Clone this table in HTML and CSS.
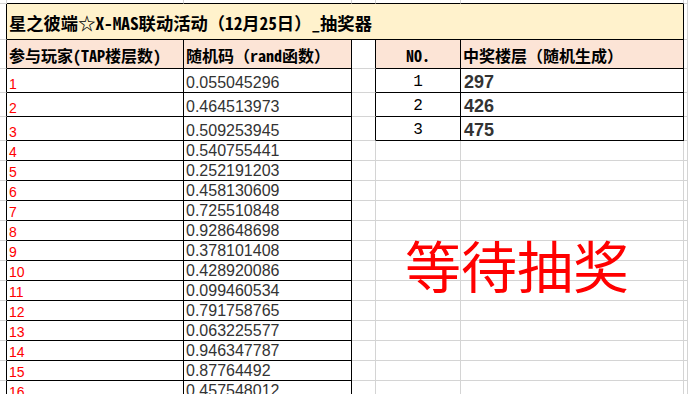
FILE: index.html
```html
<!DOCTYPE html>
<html lang="zh">
<head>
<meta charset="utf-8">
<title>抽奖器</title>
<link rel="stylesheet" href="styles.css">
</head>
<body>
<div class="sheet">
  <!-- row 0 -->
  <div class="c"></div><div class="c kb"></div><div class="c kb"></div><div class="c kb"></div><div class="c kb"></div><div class="c kb"></div><div class="c"></div>
  <!-- title -->
  <div class="c kr"></div>
  <div class="c kr kb title">星之彼端☆X-MAS联动活动（12月25日）_抽奖器</div>
  <div class="c"></div>
  <!-- header -->
  <div class="c kr"></div>
  <div class="c kr kb head">参与玩家(TAP楼层数)</div>
  <div class="c kr kb head">随机码（rand函数）</div>
  <div class="c kr"></div>
  <div class="c kr kb head center">NO.</div>
  <div class="c kr kb head">中奖楼层（随机生成）</div>
  <div class="c"></div>
  <!-- rows 1-3 -->
  <div class="c kr"></div><div class="c kr kb lbl">1</div><div class="c kr kb num">0.055045296</div><div class="c kr"></div><div class="c kr kb no">1</div><div class="c kr kb win">297</div><div class="c"></div>
  <div class="c kr"></div><div class="c kr kb lbl">2</div><div class="c kr kb num">0.464513973</div><div class="c kr"></div><div class="c kr kb no">2</div><div class="c kr kb win">426</div><div class="c"></div>
  <div class="c kr"></div><div class="c kr kb lbl">3</div><div class="c kr kb num">0.509253945</div><div class="c kr"></div><div class="c kr kb no">3</div><div class="c kr kb win">475</div><div class="c"></div>
  <!-- rows 4-16 -->
  <div class="c kr"></div><div class="c kr kb lbl">4</div><div class="c kr kb num">0.540755441</div><div class="c"></div><div class="c"></div><div class="c"></div><div class="c"></div>
  <div class="c kr"></div><div class="c kr kb lbl">5</div><div class="c kr kb num">0.252191203</div><div class="c"></div><div class="c"></div><div class="c"></div><div class="c"></div>
  <div class="c kr"></div><div class="c kr kb lbl">6</div><div class="c kr kb num">0.458130609</div><div class="c"></div><div class="c"></div><div class="c"></div><div class="c"></div>
  <div class="c kr"></div><div class="c kr kb lbl">7</div><div class="c kr kb num">0.725510848</div><div class="c"></div><div class="c"></div><div class="c"></div><div class="c"></div>
  <div class="c kr"></div><div class="c kr kb lbl">8</div><div class="c kr kb num">0.928648698</div><div class="c"></div><div class="c"></div><div class="c"></div><div class="c"></div>
  <div class="c kr"></div><div class="c kr kb lbl">9</div><div class="c kr kb num">0.378101408</div><div class="c"></div><div class="c"></div><div class="c"></div><div class="c"></div>
  <div class="c kr"></div><div class="c kr kb lbl">10</div><div class="c kr kb num">0.428920086</div><div class="c"></div><div class="c"></div><div class="c"></div><div class="c"></div>
  <div class="c kr"></div><div class="c kr kb lbl">11</div><div class="c kr kb num">0.099460534</div><div class="c"></div><div class="c"></div><div class="c"></div><div class="c"></div>
  <div class="c kr"></div><div class="c kr kb lbl">12</div><div class="c kr kb num">0.791758765</div><div class="c"></div><div class="c"></div><div class="c"></div><div class="c"></div>
  <div class="c kr"></div><div class="c kr kb lbl">13</div><div class="c kr kb num">0.063225577</div><div class="c"></div><div class="c"></div><div class="c"></div><div class="c"></div>
  <div class="c kr"></div><div class="c kr kb lbl">14</div><div class="c kr kb num">0.946347787</div><div class="c"></div><div class="c"></div><div class="c"></div><div class="c"></div>
  <div class="c kr"></div><div class="c kr kb lbl">15</div><div class="c kr kb num">0.87764492</div><div class="c"></div><div class="c"></div><div class="c"></div><div class="c"></div>
  <div class="c kr"></div><div class="c kr kb lbl">16</div><div class="c kr kb num">0.457548012</div><div class="c"></div><div class="c"></div><div class="c"></div><div class="c"></div>

  <div class="wait">等待抽奖</div>
</div>
</body>
</html>
```

FILE: styles.css
```css
html, body {
  margin: 0;
  padding: 0;
  background: #ffffff;
  overflow: hidden;
}

.sheet {
  position: relative;
  display: grid;
  grid-template-columns: 7px 177px 168px 24px 85px 223px 4px;
  grid-template-rows: 4px 36px 29px repeat(3, 24px) repeat(13, 20px);
  width: 688px;
  height: 394px;
  overflow: hidden;
  font-family: "Liberation Sans", Arial, sans-serif;
}

.c {
  box-sizing: border-box;
  min-width: 0;
  border-right: 1px solid #d4d4d4;
  border-bottom: 1px solid #d4d4d4;
  display: flex;
  align-items: flex-end;
  white-space: nowrap;
  overflow: hidden;
}

.kr { border-right-color: #000; }
.kb { border-bottom-color: #000; }

.title {
  grid-column: 2 / 7;
  background: #fff2cc;
  align-items: center;
  padding: 2px 0 0 2px;
  font-family: "Noto Sans Mono CJK SC", "Noto Sans CJK SC", monospace;
  font-weight: 700;
  font-size: 17.3px;
  line-height: 20px;
  color: #000;
}

.head {
  background: #fce4d6;
  align-items: center;
  padding: 1px 0 0 2px;
  font-family: "Noto Sans Mono CJK SC", "Noto Sans CJK SC", monospace;
  font-weight: 700;
  font-size: 16px;
  line-height: 20px;
  color: #000;
}

.center { justify-content: center; padding-left: 0; }

.lbl {
  padding-left: 2px;
  font-size: 14px;
  line-height: 16px;
  color: #ff0000;
}

.num {
  padding-left: 2px;
  font-size: 16px;
  line-height: 18px;
  color: #333333;
}

.no {
  justify-content: center;
  font-family: "Liberation Mono", "Noto Sans Mono CJK SC", monospace;
  font-size: 16px;
  line-height: 20px;
  color: #000;
}

.win {
  padding-left: 3px;
  font-weight: 700;
  font-size: 18px;
  line-height: 20px;
  color: #333333;
}

.wait {
  position: absolute;
  left: 405px;
  top: 236px;
  font-family: "Noto Sans CJK SC", sans-serif;
  font-weight: 400;
  font-size: 56px;
  line-height: 56px;
  color: #ff0000;
  white-space: nowrap;
}
```
